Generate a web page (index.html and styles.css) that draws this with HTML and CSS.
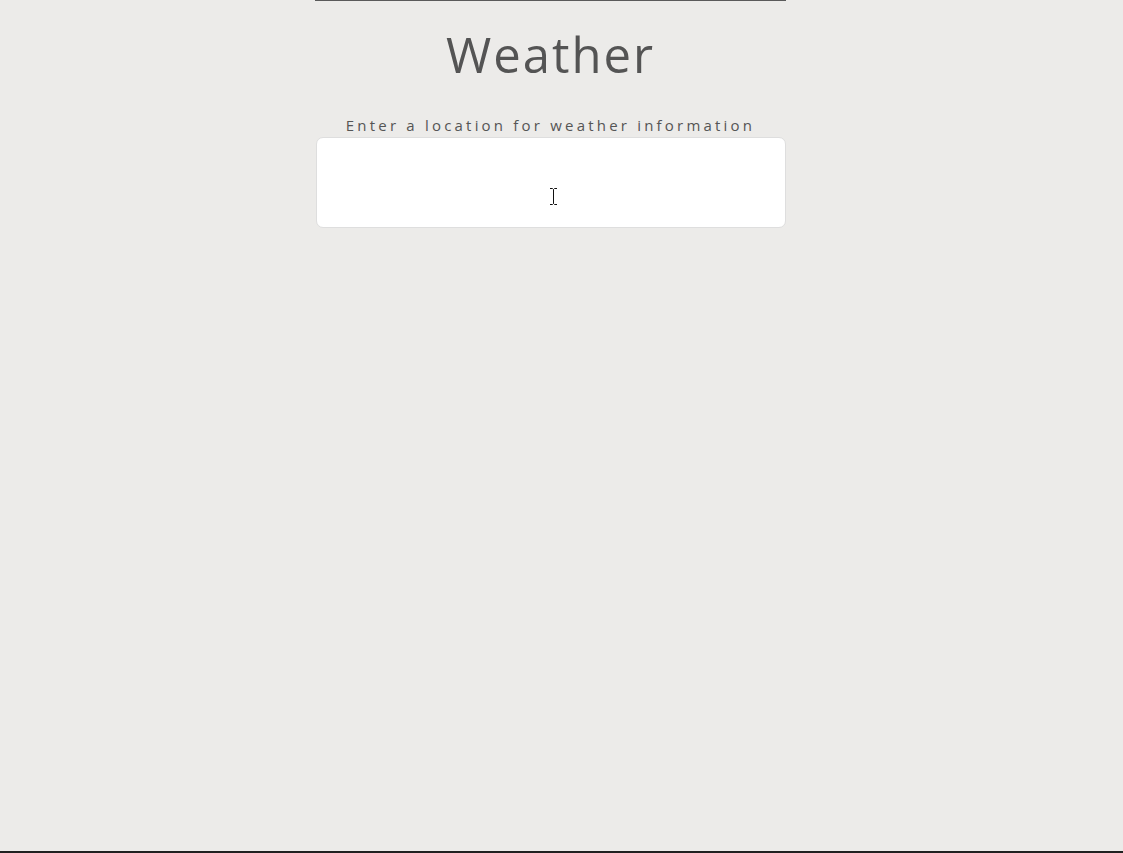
FILE: index.html
```html
<!DOCTYPE html>
<html lang="en">
<head>
<meta charset="utf-8">
<title>Weather</title>
<link rel="stylesheet" href="styles.css">
</head>
<body>
<div class="page">
  <div class="stage">
    <main class="app">
      <div class="rule"></div>
      <h1 class="title">Weather</h1>
      <label class="prompt" for="loc">Enter a location for weather information</label>
      <div class="field">
        <input id="loc" class="input" type="text" aria-label="Location">
        <svg class="cursor" width="9" height="17" viewBox="0 0 9 17" aria-hidden="true">
          <path d="M1 0.5h2.5l1 1 1-1H8M4.5 1.5v14M1 16.5h2.5l1-1 1 1H8" fill="none" stroke="#111" stroke-width="1"/>
        </svg>
      </div>
    </main>
  </div>
  <div class="taskbar"></div>
</div>
</body>
</html>
```
FILE: styles.css
```css
html, body {
  height: 100%;
  margin: 0;
}
body {
  background: #ecebe9;
  font-family: "Open Sans", "Noto Sans", sans-serif;
  color: #555555;
}
.page {
  height: 100%;
  display: flex;
  flex-direction: column;
}
.stage {
  flex: 1;
  display: flex;
  justify-content: center;
  padding-right: 22px;
}
.app {
  width: 471px;
  display: flex;
  flex-direction: column;
  align-items: center;
}
.rule {
  align-self: stretch;
  height: 1px;
  background: #5a5a5a;
}
.title {
  margin: 17px 0 0;
  font-size: 49px;
  font-weight: 400;
  letter-spacing: 2px;
  line-height: 72px;
  color: #545454;
}
.prompt {
  margin-top: 25px;
  font-size: 15px;
  letter-spacing: 3.2px;
  line-height: 20px;
  color: #555555;
}
.field {
  position: relative;
  align-self: stretch;
  margin-top: 2px;
  margin-left: 1px;
}
.input {
  display: block;
  box-sizing: border-box;
  width: 100%;
  height: 91px;
  border: 1px solid #dedede;
  border-radius: 7px;
  background: #ffffff;
  outline: none;
}
.cursor {
  position: absolute;
  left: 233px;
  top: 51px;
}
.taskbar {
  height: 2px;
  background: #202020;
}
```
